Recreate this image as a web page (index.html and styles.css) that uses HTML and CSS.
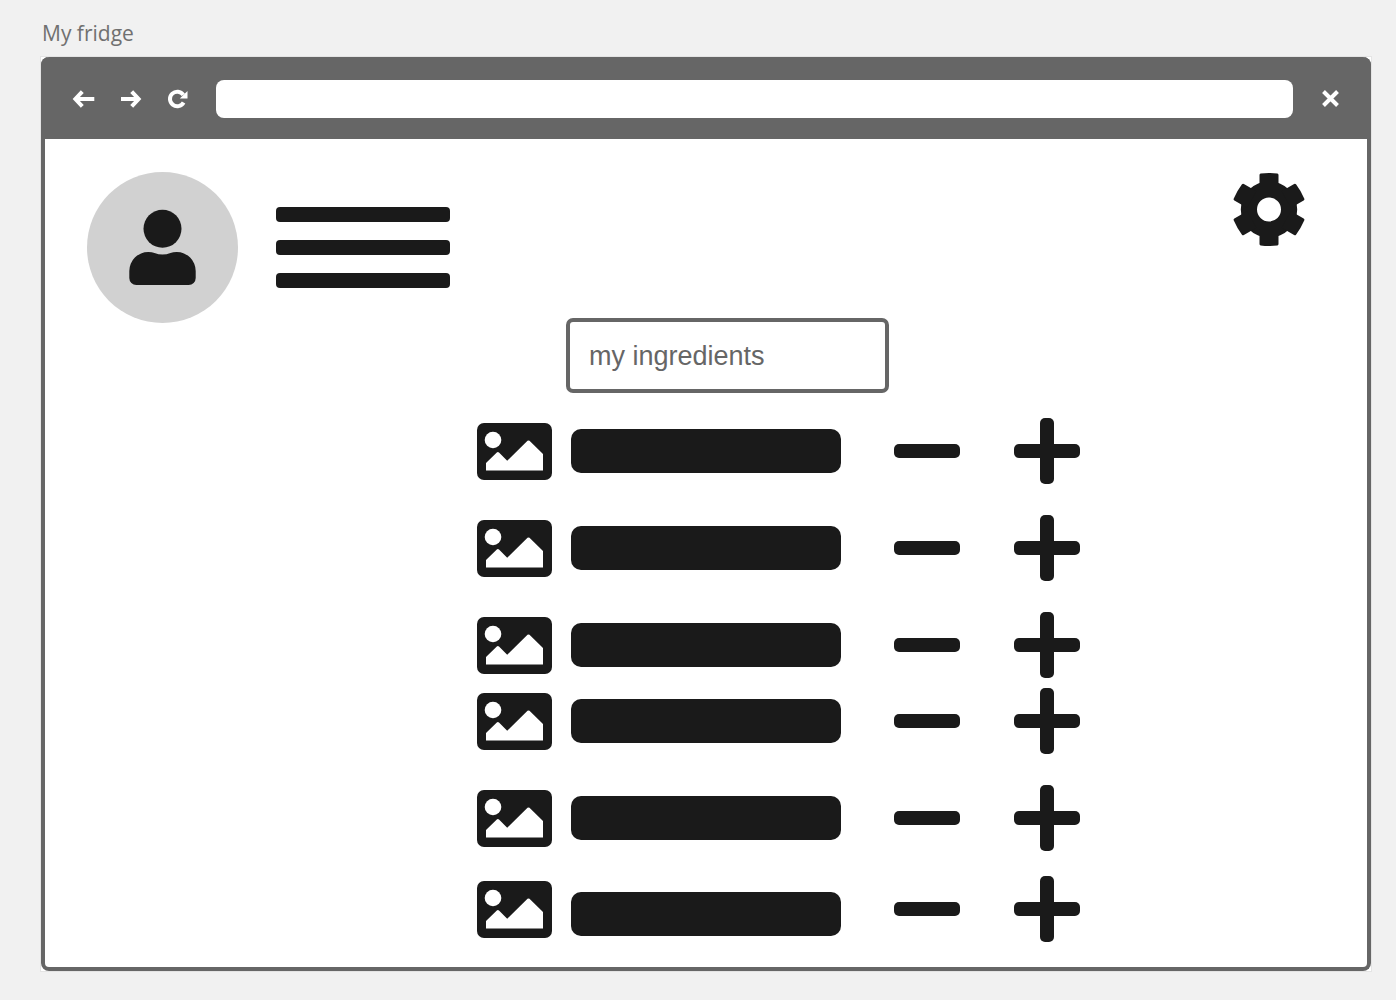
FILE: index.html
```html
<!DOCTYPE html>
<html lang="en">
<head>
<meta charset="utf-8">
<meta name="viewport" content="width=device-width, initial-scale=1">
<title>My fridge</title>
<link rel="stylesheet" href="styles.css">
</head>
<body>
<svg class="sprites" aria-hidden="true">
  <symbol id="picture" viewBox="0 0 75 57">
    <rect width="75" height="57" rx="7" fill="#1a1a1a"/>
    <circle cx="16" cy="17" r="8.3" fill="#fff"/>
    <path d="M9 47.5V40L19.8 29.5Q20.9 28.6 22 29.5L30.2 37.8 50.5 17.8Q51.5 17 52.5 17.8L66 31V47.5Z" fill="#fff"/>
  </symbol>
  <symbol id="minus" viewBox="0 0 66 66">
    <rect y="26" width="66" height="14" rx="5"/>
  </symbol>
  <symbol id="plus" viewBox="0 0 66 66">
    <rect y="26" width="66" height="14" rx="5"/>
    <rect x="26" width="14" height="66" rx="5"/>
  </symbol>
</svg>

<h1 class="title">My fridge</h1>

<div class="artboard">
  <div class="window">
    <div class="toolbar">
      <button class="tool" type="button" aria-label="Back">
        <svg viewBox="0 0 24 24"><path d="M4 12H22.3M10.3 4.7 3.4 12 10.3 19.3"/></svg>
      </button>
      <button class="tool" type="button" aria-label="Forward">
        <svg viewBox="0 0 24 24"><path d="M2 12H19.5M12.7 4.7 19.6 12 12.7 19.3"/></svg>
      </button>
      <button class="tool" type="button" aria-label="Reload">
        <svg viewBox="0 0 24 24"><path d="M17.3 7.8A7.3 7.3 0 1 0 17.6 15.6"/><path class="solid" d="M21.5 4V11.6H13.8Z"/></svg>
      </button>
      <input class="address" type="text" aria-label="Address">
      <button class="tool" type="button" aria-label="Close">
        <svg viewBox="0 0 24 24"><path d="M4.5 4.5 18.5 18.5M18.5 4.5 4.5 18.5"/></svg>
      </button>
    </div>

    <header class="header">
      <button class="plain" type="button" aria-label="Profile">
        <svg class="avatar" viewBox="0 0 151 151">
          <circle cx="75.5" cy="75.5" r="75.5" fill="#d1d1d1"/>
          <circle cx="75.5" cy="56.7" r="19"/>
          <path d="M42.3 106V99A19 19 0 0 1 61.3 80Q65 80 67.5 81Q75.5 84.2 83.5 81Q86 80 89.7 80A19 19 0 0 1 108.7 99V106A7 7 0 0 1 101.7 113H49.3A7 7 0 0 1 42.3 106Z"/>
        </svg>
      </button>
      <button class="plain menu" type="button" aria-label="Menu">
        <span class="line"></span>
        <span class="line"></span>
        <span class="line"></span>
      </button>
      <button class="plain settings" type="button" aria-label="Settings">
        <svg class="gear" viewBox="-37 -37.5 74 74">
          <defs>
            <path id="teeth" d="M-9.5 -20V-34.5Q-9.5 -35.7 -8.3 -36Q0 -37 8.3 -36Q9.5 -35.7 9.5 -34.5V-20ZM-9.5 20V34.5Q-9.5 35.7 -8.3 36Q0 37 8.3 36Q9.5 35.7 9.5 34.5V20Z"/>
          </defs>
          <path fill-rule="evenodd" d="M-28.2 0A28.2 28.2 0 1 1 28.2 0A28.2 28.2 0 1 1 -28.2 0ZM-12 0A12 12 0 1 0 12 0A12 12 0 1 0 -12 0Z"/>
          <use href="#teeth"/>
          <use href="#teeth" transform="rotate(60)"/>
          <use href="#teeth" transform="rotate(120)"/>
        </svg>
      </button>
    </header>

    <main class="content">
      <input class="search" type="text" placeholder="my ingredients" aria-label="my ingredients">
      <ul class="list">
        <li class="item">
          <svg class="picture"><use href="#picture"/></svg><span class="name"></span>
          <button class="plain" type="button" aria-label="Remove one"><svg class="step"><use href="#minus"/></svg></button>
          <button class="plain add" type="button" aria-label="Add one"><svg class="step"><use href="#plus"/></svg></button>
        </li>
        <li class="item">
          <svg class="picture"><use href="#picture"/></svg><span class="name"></span>
          <button class="plain" type="button" aria-label="Remove one"><svg class="step"><use href="#minus"/></svg></button>
          <button class="plain add" type="button" aria-label="Add one"><svg class="step"><use href="#plus"/></svg></button>
        </li>
        <li class="item">
          <svg class="picture"><use href="#picture"/></svg><span class="name"></span>
          <button class="plain" type="button" aria-label="Remove one"><svg class="step"><use href="#minus"/></svg></button>
          <button class="plain add" type="button" aria-label="Add one"><svg class="step"><use href="#plus"/></svg></button>
        </li>
      </ul>
      <ul class="list list-lower">
        <li class="item">
          <svg class="picture"><use href="#picture"/></svg><span class="name"></span>
          <button class="plain" type="button" aria-label="Remove one"><svg class="step"><use href="#minus"/></svg></button>
          <button class="plain add" type="button" aria-label="Add one"><svg class="step"><use href="#plus"/></svg></button>
        </li>
        <li class="item">
          <svg class="picture"><use href="#picture"/></svg><span class="name"></span>
          <button class="plain" type="button" aria-label="Remove one"><svg class="step"><use href="#minus"/></svg></button>
          <button class="plain add" type="button" aria-label="Add one"><svg class="step"><use href="#plus"/></svg></button>
        </li>
        <li class="item">
          <svg class="picture"><use href="#picture"/></svg><span class="name"></span>
          <button class="plain" type="button" aria-label="Remove one"><svg class="step"><use href="#minus"/></svg></button>
          <button class="plain add" type="button" aria-label="Add one"><svg class="step"><use href="#plus"/></svg></button>
        </li>
      </ul>
    </main>
  </div>
</div>
</body>
</html>
```
FILE: styles.css
```css
* {
  box-sizing: border-box;
}

body {
  margin: 0;
  padding: 18px 24px 28px 40px;
  background: #f1f1f1;
  color: #1a1a1a;
  font-family: "Open Sans", sans-serif;
}

.sprites {
  display: none;
}

svg {
  display: block;
  fill: #1a1a1a;
}

.title {
  margin: 0 0 8px;
  padding-left: 2px;
  color: #707070;
  font-size: 21px;
  font-weight: 400;
  line-height: 30px;
}

.artboard {
  border: 1px solid #e4e4e4;
  background: #fff;
}

.window {
  border: 4px solid #666;
  border-top: 0;
  border-radius: 8px;
  background: #fff;
}

/* Browser bar */
.toolbar {
  display: flex;
  align-items: center;
  gap: 23px;
  height: 82px;
  margin: 0 -4px;
  padding: 1px 28px 0 31px;
  border-radius: 8px 8px 0 0;
  background: #666;
}

.tool {
  flex: none;
  width: 24px;
  height: 24px;
  padding: 0;
  border: 0;
  background: none;
}

.tool path {
  fill: none;
  stroke: #fff;
  stroke-width: 4;
}

.tool .solid {
  fill: #fff;
  stroke: none;
}

.address {
  flex: 1;
  min-width: 0;
  height: 38px;
  margin: 0 3px;
  padding: 0 12px;
  border: 0;
  border-radius: 8px;
  background: #fff;
  font-size: 21px;
}

/* Profile, menu and settings */
.plain {
  flex: none;
  padding: 0;
  border: 0;
  background: none;
}

.header {
  display: flex;
  align-items: center;
  gap: 38px;
  padding: 33px 61px 0 42px;
}

.avatar {
  width: 151px;
  height: 151px;
}

.menu {
  display: grid;
  gap: 18px;
  width: 174px;
}

.line {
  height: 15px;
  border-radius: 4px;
  background: #1a1a1a;
}

.settings {
  align-self: flex-start;
  margin-left: auto;
}

.gear {
  width: 74px;
  height: 74px;
}

/* Ingredients */
.content {
  display: grid;
  grid-template-columns: 432fr 603px 287fr;
  padding-bottom: 25px;
}

.content > * {
  grid-column: 2;
}

.search {
  width: 323px;
  height: 75px;
  margin: -5px 0 25px 89px;
  padding: 2px 19px 0;
  border: 4px solid #666;
  border-radius: 7px;
  background: #fff;
  color: #666;
  font-family: "Liberation Sans", Arial, sans-serif;
  font-size: 27px;
}

.search::placeholder {
  color: #666;
  opacity: 1;
}

.list {
  display: grid;
  gap: 31px;
  margin: 0;
  padding: 0;
  list-style: none;
}

.list-lower {
  margin-top: 10px;
}

.item {
  display: flex;
  align-items: center;
}

.picture {
  width: 75px;
  height: 57px;
}

.name {
  width: 270px;
  height: 44px;
  margin: 0 53px 0 19px;
  border-radius: 10px;
  background: #1a1a1a;
}

.step {
  width: 66px;
  height: 66px;
}

.add {
  margin-left: auto;
}

.list-lower .item:last-child {
  margin-top: -6px;
}

.list-lower .item:last-child .name {
  margin-top: 10px;
}
```
